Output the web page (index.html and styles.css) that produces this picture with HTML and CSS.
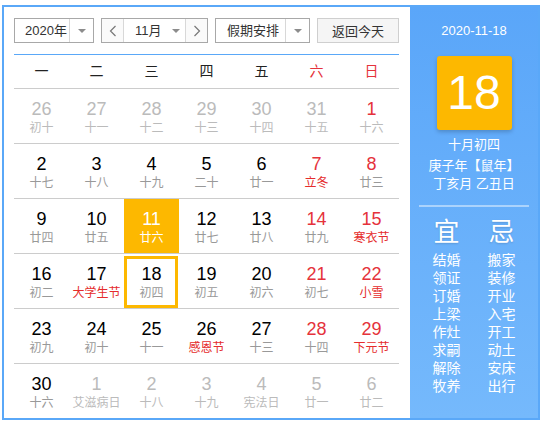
FILE: index.html
```html
<!DOCTYPE html>
<html lang="zh-CN">

<head>
    <meta charset="UTF-8">
    <meta name="viewport" content="width=device-width, initial-scale=1.0">
    <title>万年历</title>
    <link rel="stylesheet" href="styles.css">
</head>

<body>
    <div class="calendar">
        <div class="main">
            <div class="toolbar">
                <div class="select year-select">
                    <span class="value">2020年</span>
                    <span class="arrow"><i class="caret"></i></span>
                </div>
                <div class="select month-select">
                    <span class="nav">
                        <svg width="8" height="12" viewBox="0 0 8 12"><polyline points="6.5,1 1.5,6 6.5,11" fill="none" stroke="#777" stroke-width="1.2"/></svg>
                    </span>
                    <span class="value">11月<i class="caret"></i></span>
                    <span class="nav">
                        <svg width="8" height="12" viewBox="0 0 8 12"><polyline points="1.5,1 6.5,6 1.5,11" fill="none" stroke="#777" stroke-width="1.2"/></svg>
                    </span>
                </div>
                <div class="select holiday-select">
                    <span class="value">假期安排</span>
                    <span class="arrow"><i class="caret"></i></span>
                </div>
                <button class="today-btn">返回今天</button>
            </div>

            <div class="weekdays">
                <span>一</span>
                <span>二</span>
                <span>三</span>
                <span>四</span>
                <span>五</span>
                <span class="weekend">六</span>
                <span class="weekend">日</span>
            </div>

            <div class="days">
                <div class="week">
                    <div class="day other"><b>26</b><small>初十</small></div>
                    <div class="day other"><b>27</b><small>十一</small></div>
                    <div class="day other"><b>28</b><small>十二</small></div>
                    <div class="day other"><b>29</b><small>十三</small></div>
                    <div class="day other"><b>30</b><small>十四</small></div>
                    <div class="day other"><b>31</b><small>十五</small></div>
                    <div class="day weekend"><b>1</b><small class="soft">十六</small></div>
                </div>
                <div class="week">
                    <div class="day"><b>2</b><small>十七</small></div>
                    <div class="day"><b>3</b><small>十八</small></div>
                    <div class="day"><b>4</b><small>十九</small></div>
                    <div class="day"><b>5</b><small>二十</small></div>
                    <div class="day"><b>6</b><small>廿一</small></div>
                    <div class="day weekend"><b>7</b><small class="festival">立冬</small></div>
                    <div class="day weekend"><b>8</b><small>廿三</small></div>
                </div>
                <div class="week">
                    <div class="day"><b>9</b><small>廿四</small></div>
                    <div class="day"><b>10</b><small>廿五</small></div>
                    <div class="day selected"><b>11</b><small>廿六</small></div>
                    <div class="day"><b>12</b><small>廿七</small></div>
                    <div class="day"><b>13</b><small>廿八</small></div>
                    <div class="day weekend"><b>14</b><small>廿九</small></div>
                    <div class="day weekend"><b>15</b><small class="festival">寒衣节</small></div>
                </div>
                <div class="week">
                    <div class="day"><b>16</b><small>初二</small></div>
                    <div class="day"><b>17</b><small class="festival">大学生节</small></div>
                    <div class="day today"><b>18</b><small>初四</small></div>
                    <div class="day"><b>19</b><small>初五</small></div>
                    <div class="day"><b>20</b><small>初六</small></div>
                    <div class="day weekend"><b>21</b><small>初七</small></div>
                    <div class="day weekend"><b>22</b><small class="festival">小雪</small></div>
                </div>
                <div class="week">
                    <div class="day"><b>23</b><small>初九</small></div>
                    <div class="day"><b>24</b><small>初十</small></div>
                    <div class="day"><b>25</b><small>十一</small></div>
                    <div class="day"><b>26</b><small class="festival">感恩节</small></div>
                    <div class="day"><b>27</b><small>十三</small></div>
                    <div class="day weekend"><b>28</b><small>十四</small></div>
                    <div class="day weekend"><b>29</b><small class="festival">下元节</small></div>
                </div>
                <div class="week">
                    <div class="day"><b>30</b><small>十六</small></div>
                    <div class="day other"><b>1</b><small>艾滋病日</small></div>
                    <div class="day other"><b>2</b><small>十八</small></div>
                    <div class="day other"><b>3</b><small>十九</small></div>
                    <div class="day other"><b>4</b><small>宪法日</small></div>
                    <div class="day other"><b>5</b><small>廿一</small></div>
                    <div class="day other"><b>6</b><small>廿二</small></div>
                </div>
            </div>
        </div>

        <div class="side">
            <div class="side-date">2020-11-18</div>
            <div class="big-day">18</div>
            <div class="lunar">
                <p class="lunar-day">十月初四</p>
                <p>庚子年【鼠年】</p>
                <p>丁亥月 乙丑日</p>
            </div>
            <div class="divider"></div>
            <div class="almanac">
                <ul>
                    <li class="title">宜</li>
                    <li>结婚</li>
                    <li>领证</li>
                    <li>订婚</li>
                    <li>上梁</li>
                    <li>作灶</li>
                    <li>求嗣</li>
                    <li>解除</li>
                    <li>牧养</li>
                </ul>
                <ul>
                    <li class="title">忌</li>
                    <li>搬家</li>
                    <li>装修</li>
                    <li>开业</li>
                    <li>入宅</li>
                    <li>开工</li>
                    <li>动土</li>
                    <li>安床</li>
                    <li>出行</li>
                </ul>
            </div>
        </div>
    </div>
</body>

</html>
```

FILE: styles.css
```css
body {
    margin: 0;
    background: #fff;
    font-family: "Liberation Sans", "Noto Sans CJK SC", sans-serif;
}

.calendar {
    display: flex;
    width: 538px;
    height: 415px;
    margin: 5px 0 0 2px;
    border: 2px solid #5aa8f8;
    box-sizing: border-box;
}

.main {
    width: 406px;
    padding: 11px 11px 0 10px;
    box-sizing: border-box;
}

/* toolbar */
.toolbar {
    display: flex;
    gap: 7px;
    height: 25px;
    padding-bottom: 11px;
    border-bottom: 1px solid #5aa8f8;
}

.select {
    display: flex;
    height: 25px;
    border: 1px solid #a8a8a8;
    box-sizing: border-box;
    background: #fff;
    font-size: 13px;
    color: #333;
}

.select .value {
    display: flex;
    align-items: center;
    line-height: 23px;
}

.select .arrow {
    display: flex;
    align-items: center;
    justify-content: center;
    width: 23px;
    border-left: 1px solid #d8d8d8;
}

.caret {
    display: inline-block;
    width: 0;
    height: 0;
    border-left: 4px solid transparent;
    border-right: 4px solid transparent;
    border-top: 4px solid #8c8c8c;
}

.year-select {
    width: 80px;
}

.year-select .value {
    width: 54px;
    padding-left: 10px;
    box-sizing: border-box;
}

.month-select {
    width: 107px;
}

.month-select .nav {
    display: flex;
    align-items: center;
    justify-content: center;
    width: 21px;
    background: #fafafa;
}

.month-select .value {
    width: 63px;
    padding-left: 11px;
    box-sizing: border-box;
    border-left: 1px solid #d8d8d8;
    border-right: 1px solid #d8d8d8;
}

.month-select .value .caret {
    margin-left: 10px;
}

.holiday-select {
    width: 95px;
}

.holiday-select .value {
    width: 69px;
    padding-left: 11px;
    box-sizing: border-box;
}

.today-btn {
    width: 82px;
    height: 25px;
    padding: 0;
    border: 1px solid #cfcfcf;
    background: #f5f5f5;
    font-family: inherit;
    font-size: 13px;
    color: #333;
}

/* weekday header */
.weekdays {
    display: grid;
    grid-template-columns: repeat(7, 1fr);
    height: 33px;
    border-bottom: 1px solid #cccccc;
    line-height: 33px;
    text-align: center;
    font-size: 14px;
    color: #222;
}

.weekdays .weekend {
    color: #e5323b;
}

/* day grid */
.week {
    display: grid;
    grid-template-columns: repeat(7, 1fr);
    height: 55px;
    border-bottom: 1px solid #cccccc;
    box-sizing: border-box;
}

.week:last-child {
    border-bottom: none;
    height: 54px;
}

.day {
    position: relative;
    display: flex;
    flex-direction: column;
    align-items: center;
    padding-top: 10px;
}

.day b {
    font-weight: normal;
    font-size: 18px;
    line-height: 20px;
    color: #000;
}

.day small {
    margin-top: 1px;
    font-size: 12px;
    line-height: 16px;
    color: #999;
    white-space: nowrap;
}

.day.weekend b {
    color: #e5323b;
}

.day small.festival {
    color: #e52c2c;
}

.day.other b,
.day.other small,
.day small.soft {
    color: #bbbbbb;
}

.day.selected {
    background: #fdb800;
}

.day.selected b,
.day.selected small {
    color: #fff;
}

.day.today::after {
    content: "";
    position: absolute;
    top: 2px;
    left: 0;
    right: 1px;
    bottom: 0;
    border: 3px solid #fdb800;
}

/* side panel */
.side {
    width: 128px;
    padding-top: 14px;
    box-sizing: border-box;
    background: linear-gradient(to bottom, #5aa6f9, #75b9fc);
    color: #fff;
    text-align: center;
}

.side-date {
    font-size: 13px;
    line-height: 20px;
}

.big-day {
    width: 75px;
    height: 74px;
    margin: 15px auto 0;
    border-radius: 3px;
    background: #fdb800;
    box-shadow: 0 2px 4px rgba(0, 0, 0, 0.2);
    font-size: 48px;
    line-height: 74px;
}

.lunar {
    margin-top: 6px;
    font-size: 13px;
}

.lunar p {
    margin: 0;
    line-height: 18px;
}

.lunar .lunar-day {
    margin-bottom: 3px;
}

.divider {
    width: 110px;
    height: 2px;
    margin: 12px auto 0;
    background: rgba(255, 255, 255, 0.45);
}

.almanac {
    display: flex;
    justify-content: center;
    gap: 15px;
    margin-top: 10px;
}

.almanac ul {
    width: 40px;
    margin: 0;
    padding: 0;
    list-style: none;
}

.almanac li {
    font-size: 14px;
    line-height: 18px;
}

.almanac li.title {
    margin-bottom: 4px;
    font-size: 26px;
    line-height: 30px;
    text-shadow: 0 1px 2px rgba(0, 0, 0, 0.15);
}
```
